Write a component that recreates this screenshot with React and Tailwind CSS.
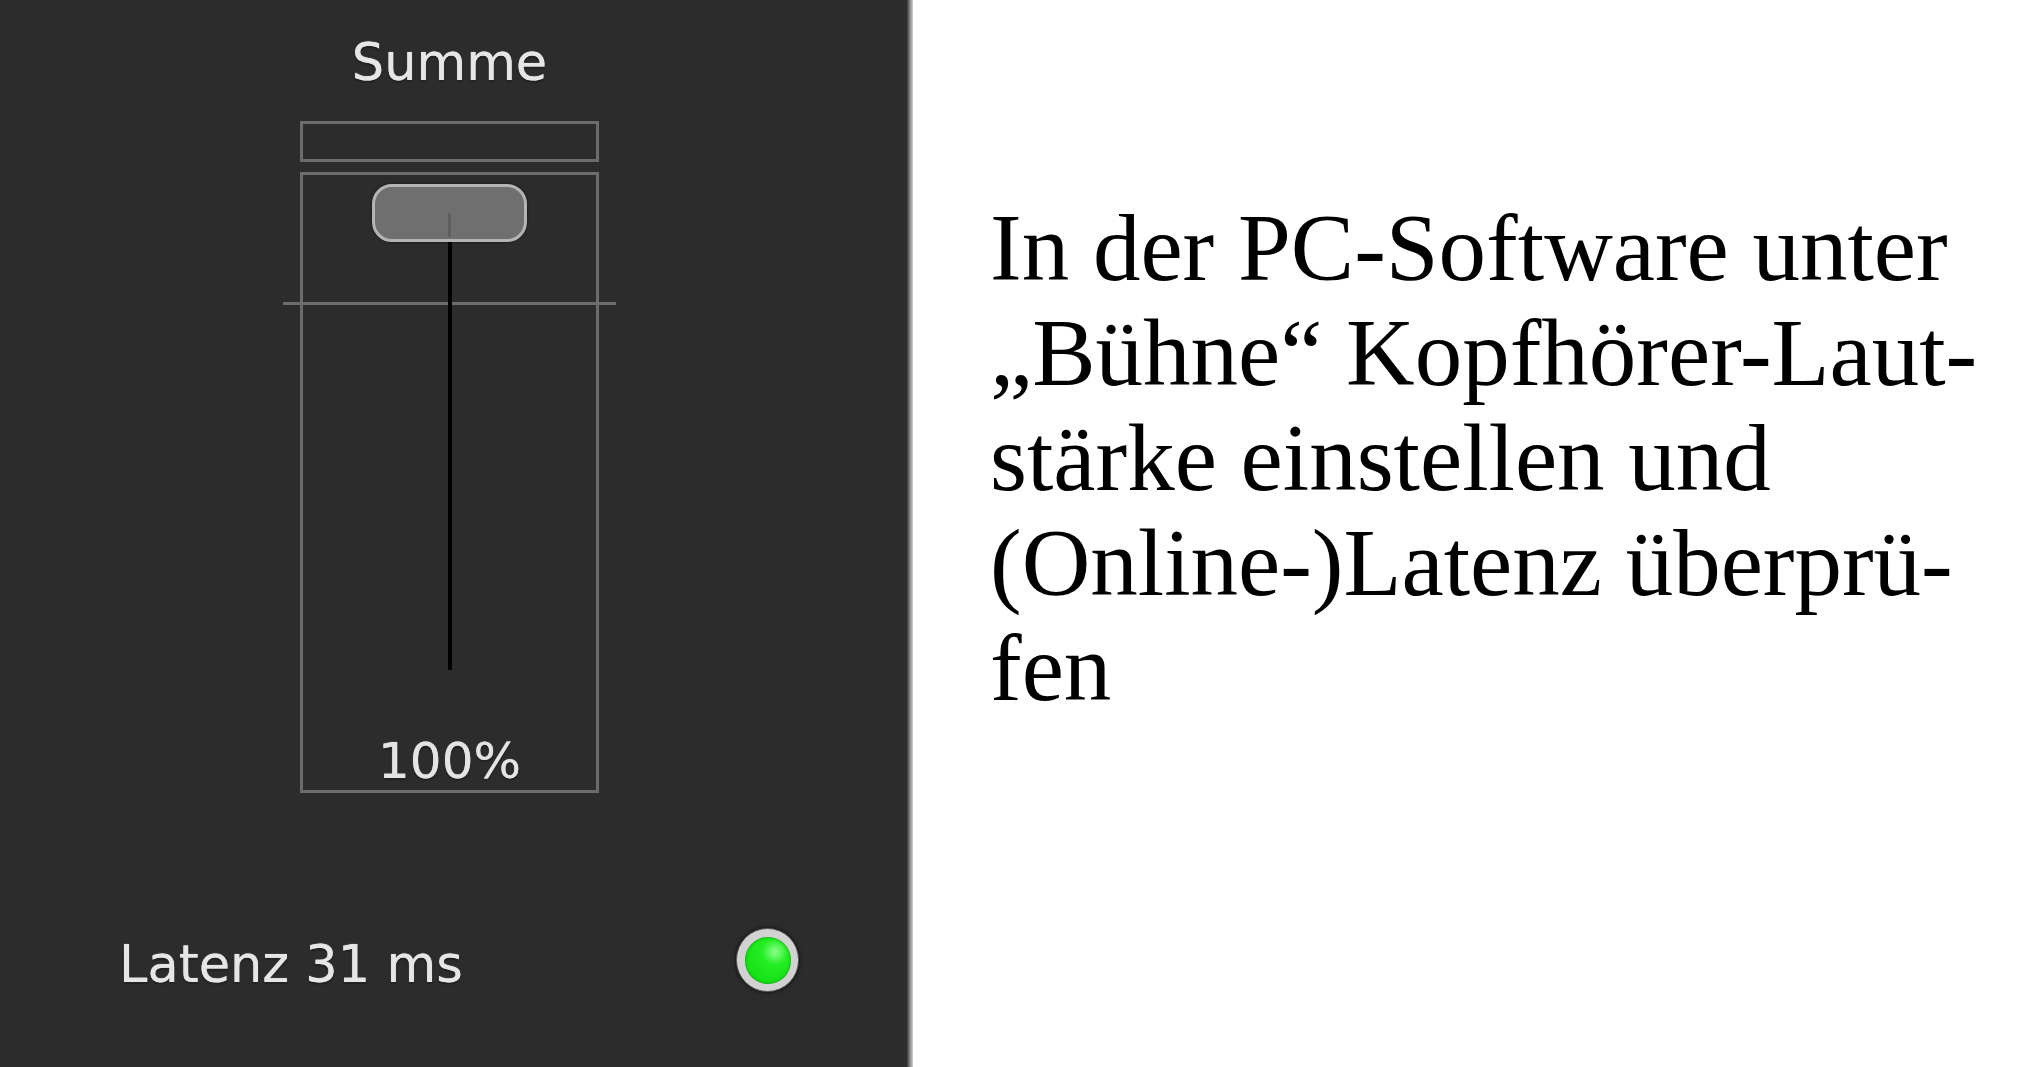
import React from "react";

const labelFont = { fontFamily: '"DejaVu Sans", Verdana, sans-serif' };

const Fader = ({ value }) => {
   return (
      <div className="flex flex-col w-[299px]">
         <div className="h-[41px] border-[3px] border-[#6c6c6c]" />
         <div className="mt-[10px] h-[621px] border-[3px] border-[#6c6c6c] flex flex-col items-center">
            <div className="mt-[9px] h-[58px] w-[155px] rounded-[20px] border-[3px] border-[#b4b4b4] bg-[#6f6f6f] flex flex-col items-center justify-end shadow-[0_0_3px_rgba(0,0,0,0.6)]">
               <div className="w-[3px] h-[24px] bg-[#5e5e5e] mb-[2px]" />
            </div>
            <div className="w-[4px] h-[60px] bg-black" />
            <div className="self-stretch -mx-[20px] flex h-[3px]">
               <div className="flex-1 bg-[#6c6c6c]" />
               <div className="w-[4px] bg-black" />
               <div className="flex-1 bg-[#6c6c6c]" />
            </div>
            <div className="w-[4px] h-[365px] bg-black" />
            <div
               className="mt-[66px] text-[50px] leading-[50px] text-[#e4e4e4] [text-shadow:0_0_1px_#e4e4e4,0_1px_2px_rgba(0,0,0,0.9)]"
               style={labelFont}
            >
               {value}
            </div>
         </div>
      </div>
   );
};

const App = () => {
   return (
      <div className="flex w-[2037px] h-[1067px] bg-white overflow-hidden">
         <div className="w-[907px] h-full bg-[#2c2c2c] flex flex-col">
            <div className="flex flex-col items-center w-[299px] ml-[300px]">
               <h2
                  className="mt-[33px] text-[51px] leading-[60px] text-[#e6e6e6] [text-shadow:0_0_1px_#e6e6e6,0_1px_2px_rgba(0,0,0,0.9)]"
                  style={labelFont}
               >
                  Summe
               </h2>
               <div className="mt-[28px]">
                  <Fader value="100%" />
               </div>
            </div>
            <div className="mt-[135px] flex items-start pl-[119px]">
               <span
                  className="mt-[7px] text-[51px] leading-[60px] text-[#e6e6e6] [text-shadow:0_0_1px_#e6e6e6,0_1px_2px_rgba(0,0,0,0.9)]"
                  style={labelFont}
               >
                  Latenz 31 ms
               </span>
               <div className="ml-auto mr-[108px] w-[63px] h-[64px] rounded-full bg-[#d2d2d2] border border-[#555] shadow-[0_0_4px_rgba(0,0,0,0.8)] flex items-center justify-center">
                  <div className="w-[46px] h-[47px] rounded-full bg-[radial-gradient(circle_at_65%_32%,#8cff8c_0%,#22ee22_30%,#0fd80f_100%)] shadow-[inset_0_0_3px_rgba(0,80,0,0.6)]" />
               </div>
            </div>
         </div>
         <div className="w-[6px] h-full bg-linear-to-r from-[#3a3a3a] via-[#8a8a8a] to-[#d0d0d0]" />
         <div className="pl-[77px] pt-[196px]">
            <p
               className="text-[95px] leading-[105px] text-black whitespace-nowrap"
               style={{ fontFamily: '"Liberation Serif", "Times New Roman", serif' }}
            >
               In der PC-Software unter
               <br />
               „Bühne“ Kopfhörer-Laut-
               <br />
               stärke einstellen und
               <br />
               (Online-)Latenz überprü-
               <br />
               fen
            </p>
         </div>
      </div>
   );
};

export default App;
